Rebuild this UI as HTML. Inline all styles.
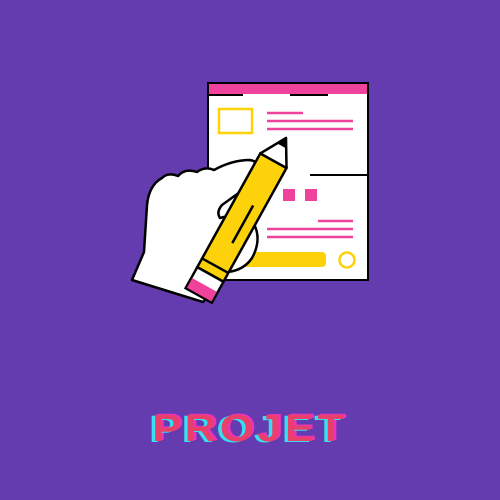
<!DOCTYPE html>
<html><head><style>
html,body{margin:0;padding:0;}
body{width:500px;height:500px;background:#653bb0;position:relative;overflow:hidden;}
svg{position:absolute;left:0;top:0;}
.t{position:absolute;left:0;width:500px;top:408px;text-align:center;font-family:"Liberation Sans",sans-serif;font-weight:bold;font-size:38px;letter-spacing:3px;color:#e8406a;text-shadow:-3px 1px 0 #36e0f0, 2px -1px 0 #f030c0;transform:scaleX(1.15);}
</style></head><body>
<svg width="500" height="500" viewBox="0 0 500 500">
<rect x="208" y="83" width="160" height="197" fill="#fff" stroke="#000" stroke-width="2"/>
<rect x="209" y="84" width="158" height="10" fill="#ef429a"/>
<line x1="209" y1="95" x2="243" y2="95" stroke="#000" stroke-width="2"/>
<line x1="290" y1="95" x2="328" y2="95" stroke="#000" stroke-width="2"/>
<rect x="219" y="109" width="33" height="24" fill="none" stroke="#fdd20a" stroke-width="2.5"/>
<g stroke="#ef429a" stroke-width="2.5">
<line x1="267" y1="113" x2="303" y2="113"/><line x1="267" y1="121" x2="353" y2="121"/><line x1="267" y1="129" x2="353" y2="129"/>
<line x1="318" y1="221" x2="353" y2="221"/><line x1="267" y1="229" x2="353" y2="229"/><line x1="267" y1="237" x2="353" y2="237"/>
</g>
<line x1="310" y1="175" x2="368" y2="175" stroke="#000" stroke-width="2"/>
<rect x="283" y="189" width="12" height="12" fill="#ef429a"/>
<rect x="305" y="189" width="12" height="12" fill="#ef429a"/>
<rect x="228" y="252" width="98" height="15" rx="4" fill="#fdd20a"/>
<circle cx="347" cy="260" r="7.5" fill="none" stroke="#fdd20a" stroke-width="2.5"/>
<line x1="258" y1="280" x2="368" y2="280" stroke="#000" stroke-width="2"/>
<path d="M132,280 L144,252 L147,205 Q149,185 162,178 Q168,172 178,176 Q185,168 197,172 Q205,166 214,170 Q232,160 250,160 Q262,162 260,176 Q256,186 240,192 L222,205 Q216,212 220,218 Q240,212 254,224 Q262,240 252,258 Q244,270 228,272 L203,302 Z" fill="#fff" stroke="#000" stroke-width="2.5" stroke-linejoin="round"/>
<g transform="translate(286,138) rotate(119)">
<rect x="26" y="-15" width="130" height="30" fill="#fdd20a" stroke="#000" stroke-width="2.5"/>
<path d="M0,0 L26,-15 L26,15 Z" fill="#fff" stroke="#000" stroke-width="2.5" stroke-linejoin="round"/>
<path d="M0,0 L9,-5 L9,5 Z" fill="#000"/>
<rect x="156" y="-15" width="24" height="30" fill="#fff" stroke="#000" stroke-width="2.5"/>
<rect x="168" y="-14" width="11" height="28" fill="#ef429a"/>
<line x1="146" y1="-15" x2="146" y2="15" stroke="#000" stroke-width="2.5"/>
<line x1="75" y1="-4" x2="118" y2="-4" stroke="#000" stroke-width="2.5"/>
</g>
</svg>
<div class="t">PROJET</div>
</body></html>
